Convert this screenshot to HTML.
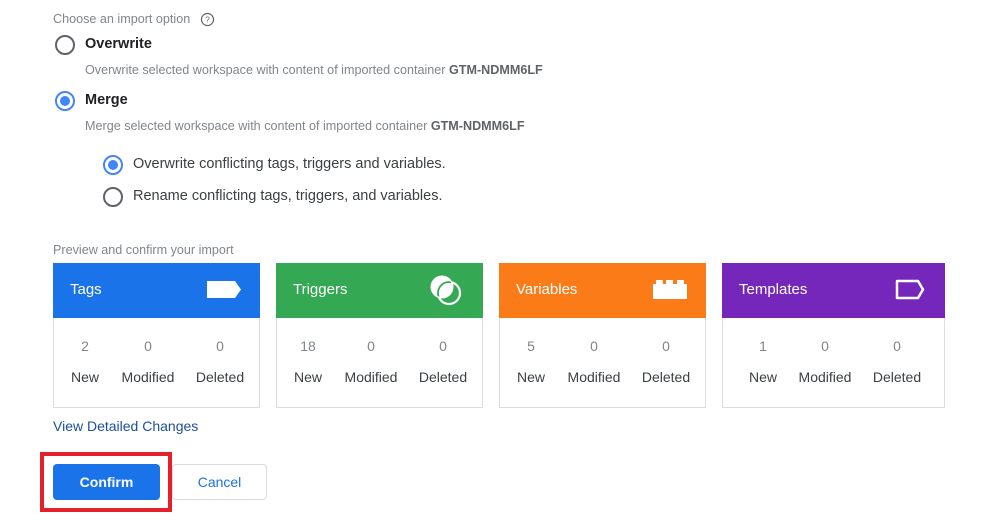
<!DOCTYPE html>
<html><head><meta charset="utf-8"><style>
*{margin:0;padding:0;box-sizing:border-box}
body{width:995px;height:524px;background:#fff;font-family:"Liberation Sans",Arial,sans-serif;position:relative;overflow:hidden;color:#202124}
.a{position:absolute;white-space:nowrap}
.radio{position:absolute;width:20px;height:20px;border-radius:50%;border:2px solid #5f6368}
.radio.on{border-color:#4285f4}
.radio.on::after{content:"";position:absolute;left:3px;top:3px;width:10px;height:10px;border-radius:50%;background:#4285f4}
.small{font-size:12.6px;color:#80868b}
.card{position:absolute;top:263px;height:145px;border:1px solid #dadce0;border-top:none}
.hd{position:absolute;left:-1px;right:-1px;top:0;height:55px;color:#fff;font-size:15px}
.hd span{position:absolute;left:17px;top:18px}
.n{position:absolute;top:75px;font-size:14px;color:#80868b;transform:translateX(-50%)}
.l{position:absolute;top:106px;font-size:14px;color:#3c4043;transform:translateX(-50%)}
</style></head><body>
<div class="a small" style="left:53px;top:12px">Choose an import option</div>
<svg class="a" style="left:200px;top:12px" width="15" height="15" viewBox="0 0 15 15"><circle cx="7.5" cy="7.5" r="6" fill="none" stroke="#5f6368" stroke-width="1.2"/><text x="7.5" y="10.5" font-size="8" text-anchor="middle" fill="#5f6368" font-family="Liberation Sans">?</text></svg>
<div class="radio" style="left:55px;top:35px"></div>
<div class="a" style="left:85px;top:36px;font-size:14.5px;font-weight:bold">Overwrite</div>
<div class="a small" style="left:85px;top:63px">Overwrite selected workspace with content of imported container <b style="color:#5f6368">GTM-NDMM6LF</b></div>
<div class="radio on" style="left:55px;top:91px"></div>
<div class="a" style="left:85px;top:92px;font-size:14.5px;font-weight:bold">Merge</div>
<div class="a small" style="left:85px;top:119px">Merge selected workspace with content of imported container <b style="color:#5f6368">GTM-NDMM6LF</b></div>
<div class="radio on" style="left:103px;top:155px"></div>
<div class="a" style="left:133px;top:156px;font-size:14.5px;color:#3c4043">Overwrite conflicting tags, triggers and variables.</div>
<div class="radio" style="left:103px;top:187px"></div>
<div class="a" style="left:133px;top:188px;font-size:14.5px;color:#3c4043">Rename conflicting tags, triggers, and variables.</div>
<div class="a small" style="left:53px;top:243px">Preview and confirm your import</div>

<div class="card" style="left:53px;width:207px"><div class="hd" style="background:#1a73e8"><span>Tags</span>
<svg class="a" style="left:153px;top:16px" width="36" height="22"><path d="M1 2H29L35 10.5L29 19H1Z" fill="#fff"/></svg></div>
<div class="n" style="left:31px">2</div><div class="n" style="left:94px">0</div><div class="n" style="left:166px">0</div>
<div class="l" style="left:31px">New</div><div class="l" style="left:94px">Modified</div><div class="l" style="left:166px">Deleted</div></div>

<div class="card" style="left:276px;width:207px"><div class="hd" style="background:#34a853"><span>Triggers</span>
<svg class="a" style="left:151px;top:8px" width="40" height="40"><defs><clipPath id="c"><circle cx="15" cy="16" r="10"/></clipPath></defs><circle cx="22" cy="22" r="11" fill="none" stroke="#fff" stroke-width="2.2"/><circle cx="15" cy="16" r="11.5" fill="#fff"/><circle cx="22" cy="22" r="11" fill="none" stroke="#34a853" stroke-width="1.8" clip-path="url(#c)"/></svg></div>
<div class="n" style="left:31px">18</div><div class="n" style="left:94px">0</div><div class="n" style="left:166px">0</div>
<div class="l" style="left:31px">New</div><div class="l" style="left:94px">Modified</div><div class="l" style="left:166px">Deleted</div></div>

<div class="card" style="left:499px;width:207px"><div class="hd" style="background:#fa7b17"><span>Variables</span>
<svg class="a" style="left:154px;top:16px" width="36" height="22"><path d="M0 5H3V1H10V5H13V1H20V5H24V1H31V5H34V20H0Z" fill="#fff"/></svg></div>
<div class="n" style="left:31px">5</div><div class="n" style="left:94px">0</div><div class="n" style="left:166px">0</div>
<div class="l" style="left:31px">New</div><div class="l" style="left:94px">Modified</div><div class="l" style="left:166px">Deleted</div></div>

<div class="card" style="left:722px;width:223px"><div class="hd" style="background:#7627bb"><span>Templates</span>
<svg class="a" style="left:173px;top:16px" width="32" height="22"><path d="M2 2H23L28 10.5L23 19H2Z" fill="none" stroke="#fff" stroke-width="2.5" stroke-linejoin="round"/></svg></div>
<div class="n" style="left:40px">1</div><div class="n" style="left:102px">0</div><div class="n" style="left:174px">0</div>
<div class="l" style="left:40px">New</div><div class="l" style="left:102px">Modified</div><div class="l" style="left:174px">Deleted</div></div>

<div class="a" style="left:53px;top:418px;font-size:14px;color:#1a4f9c">View Detailed Changes</div>
<div class="a" style="left:40px;top:452px;width:132px;height:60px;border:4px solid #e4202a"></div>
<div class="a" style="left:53px;top:464px;width:107px;height:36px;background:#1a73e8;border-radius:4px;color:#fff;font-weight:bold;font-size:14px;text-align:center;line-height:36px">Confirm</div>
<div class="a" style="left:172px;top:464px;width:95px;height:36px;border:1px solid #dadce0;border-radius:4px;color:#1a73e8;font-size:14px;text-align:center;line-height:34px">Cancel</div>
</body></html>
